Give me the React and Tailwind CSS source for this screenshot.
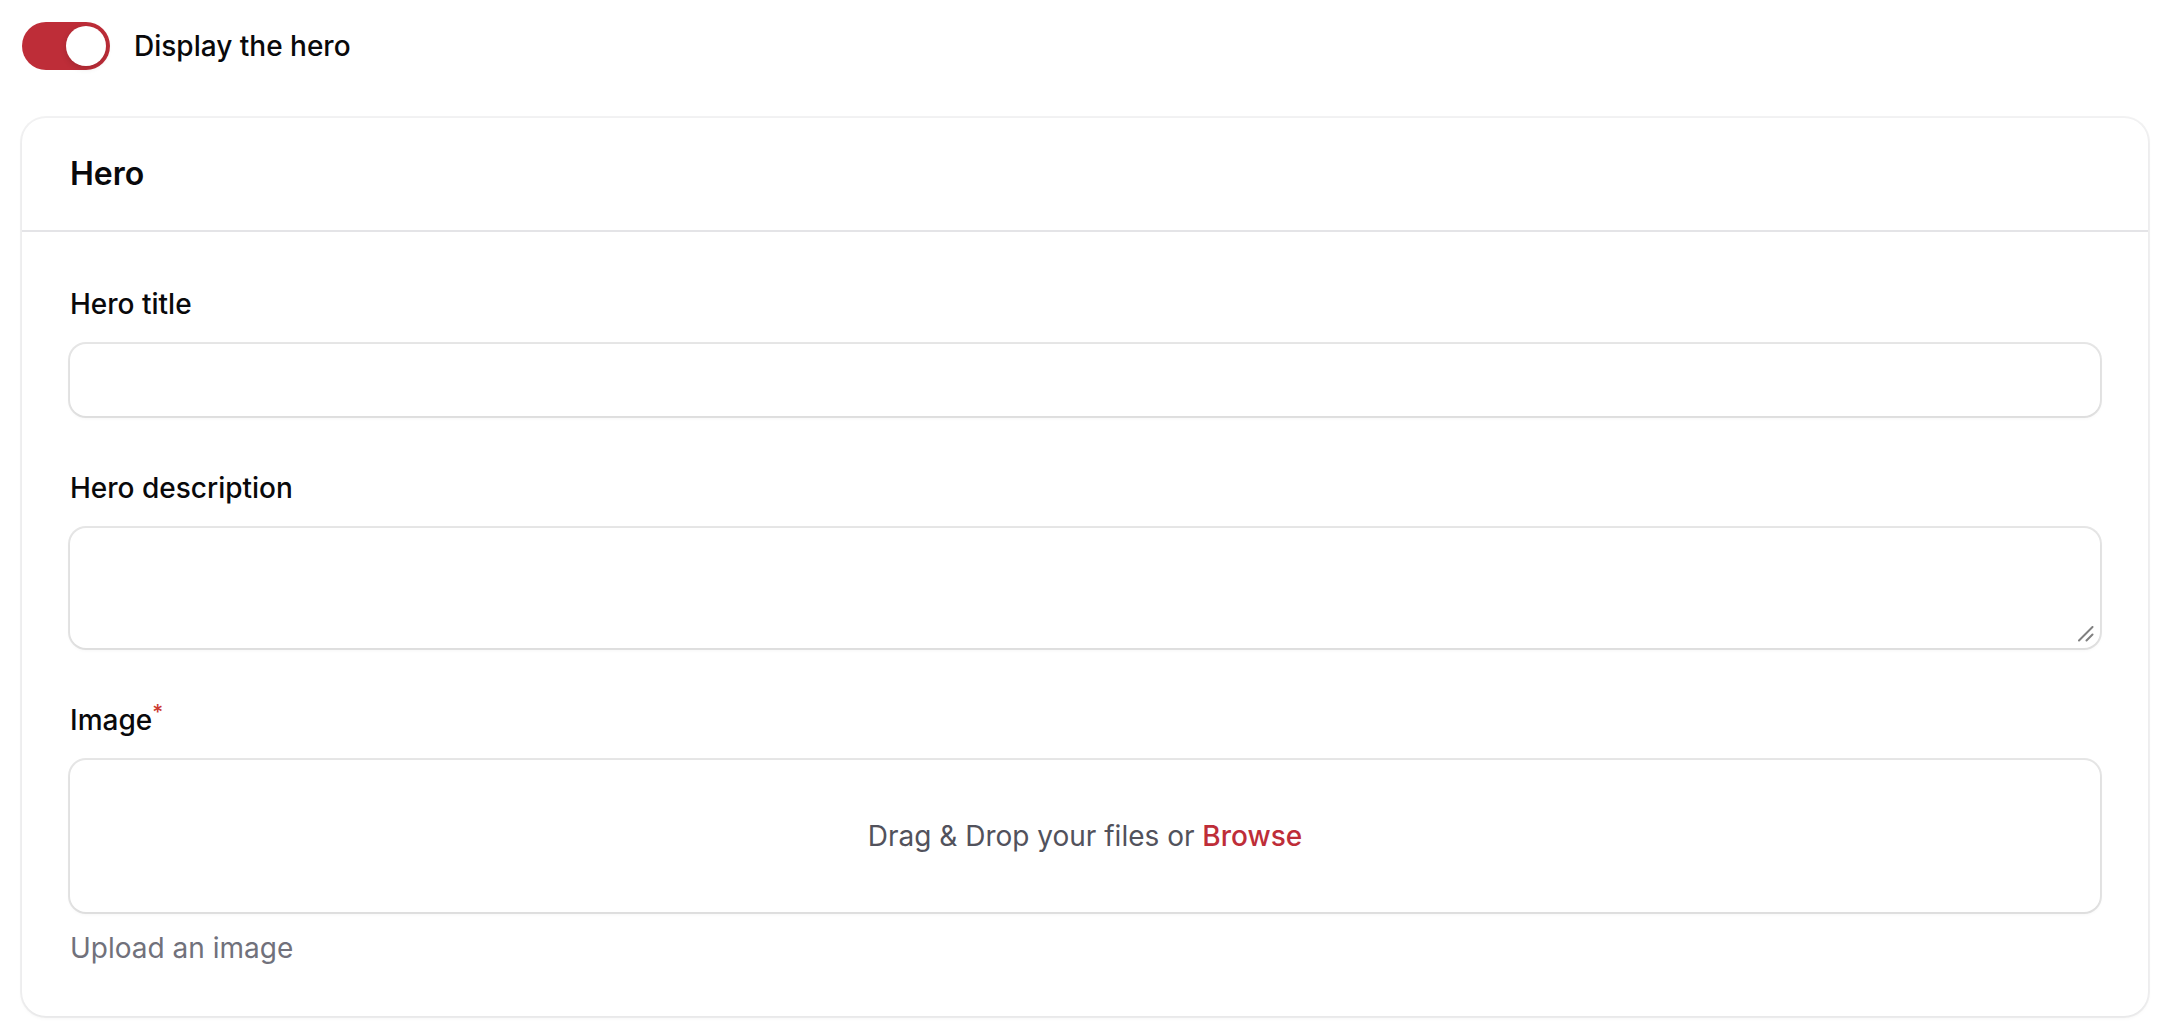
import React, { useState } from "react";

const fieldClass =
  "block w-full rounded-2xl bg-white px-6 text-[28px] text-zinc-950 shadow-[0_2px_4px_rgba(0,0,0,0.05)] ring-2 ring-zinc-950/10 outline-none focus:ring-[#be2d38]";

const Toggle = ({ id, checked, onChange }) => (
  <button
    id={id}
    type="button"
    role="switch"
    aria-checked={checked}
    onClick={() => onChange(!checked)}
    className={`flex h-12 w-22 shrink-0 cursor-pointer rounded-full p-1 transition-colors ${
      checked ? "justify-end bg-[#be2d38]" : "justify-start bg-zinc-200"
    }`}
  >
    <span className="size-10 rounded-full bg-white shadow-[0_2px_6px_rgba(0,0,0,0.15)]" />
  </button>
);

const Field = ({ id, label, required, children }) => (
  <div className="flex flex-col gap-4">
    <label htmlFor={id} className="self-start text-[28px] leading-12 font-medium">
      {label}
      {required && <sup className="text-[21px] text-[#cc3a31]">*</sup>}
    </label>
    {children}
  </div>
);

const App = () => {
  const [displayHero, setDisplayHero] = useState(true);
  const [title, setTitle] = useState("");
  const [description, setDescription] = useState("");

  return (
    <main className="flex flex-col gap-12 bg-white py-[22px] pr-[26px] pl-[22px] font-['Inter',sans-serif] text-zinc-950 antialiased">
      <div className="flex items-center gap-6">
        <Toggle id="display-hero" checked={displayHero} onChange={setDisplayHero} />
        <label htmlFor="display-hero" className="text-[28px] leading-12 font-medium">
          Display the hero
        </label>
      </div>

      {displayHero && (
        <section className="rounded-3xl bg-white shadow-[0_2px_4px_rgba(0,0,0,0.05)] ring-2 ring-zinc-950/5">
          <header className="px-12 py-8">
            <h3 className="text-[32px] leading-12 font-semibold">Hero</h3>
          </header>

          <div className="flex flex-col gap-12 border-t-2 border-zinc-200 p-12">
            <Field id="hero-title" label="Hero title">
              <input
                id="hero-title"
                type="text"
                value={title}
                onChange={(e) => setTitle(e.target.value)}
                className={`${fieldClass} h-18`}
              />
            </Field>

            <Field id="hero-description" label="Hero description">
              <div className="relative">
                <textarea
                  id="hero-description"
                  value={description}
                  onChange={(e) => setDescription(e.target.value)}
                  className={`${fieldClass} h-30 resize-none py-3`}
                />
                {/* resize handle */}
                <svg
                  viewBox="0 0 16 16"
                  aria-hidden="true"
                  className="pointer-events-none absolute right-1.5 bottom-1.5 size-4"
                  fill="none"
                  stroke="#808080"
                  strokeWidth="2"
                  strokeLinecap="round"
                >
                  <path d="M1 14.5 14.5 1M8.5 14.5 14.5 8.5" />
                </svg>
              </div>
            </Field>

            <Field id="hero-image" label="Image" required>
              <div className="flex h-38 items-center justify-center rounded-2xl bg-white text-[28px] leading-10 text-zinc-600 shadow-[0_2px_4px_rgba(0,0,0,0.05)] ring-2 ring-zinc-950/10">
                <input
                  id="hero-image"
                  type="file"
                  accept="image/*"
                  aria-describedby="hero-image-help"
                  className="sr-only"
                />
                <label htmlFor="hero-image" className="cursor-pointer">
                  Drag &amp; Drop your files or{" "}
                  <span className="font-medium text-[#be2d38]">Browse</span>
                </label>
              </div>
              <p id="hero-image-help" className="text-[28px] leading-10 text-zinc-500">
                Upload an image
              </p>
            </Field>
          </div>
        </section>
      )}
    </main>
  );
};

export default App;
